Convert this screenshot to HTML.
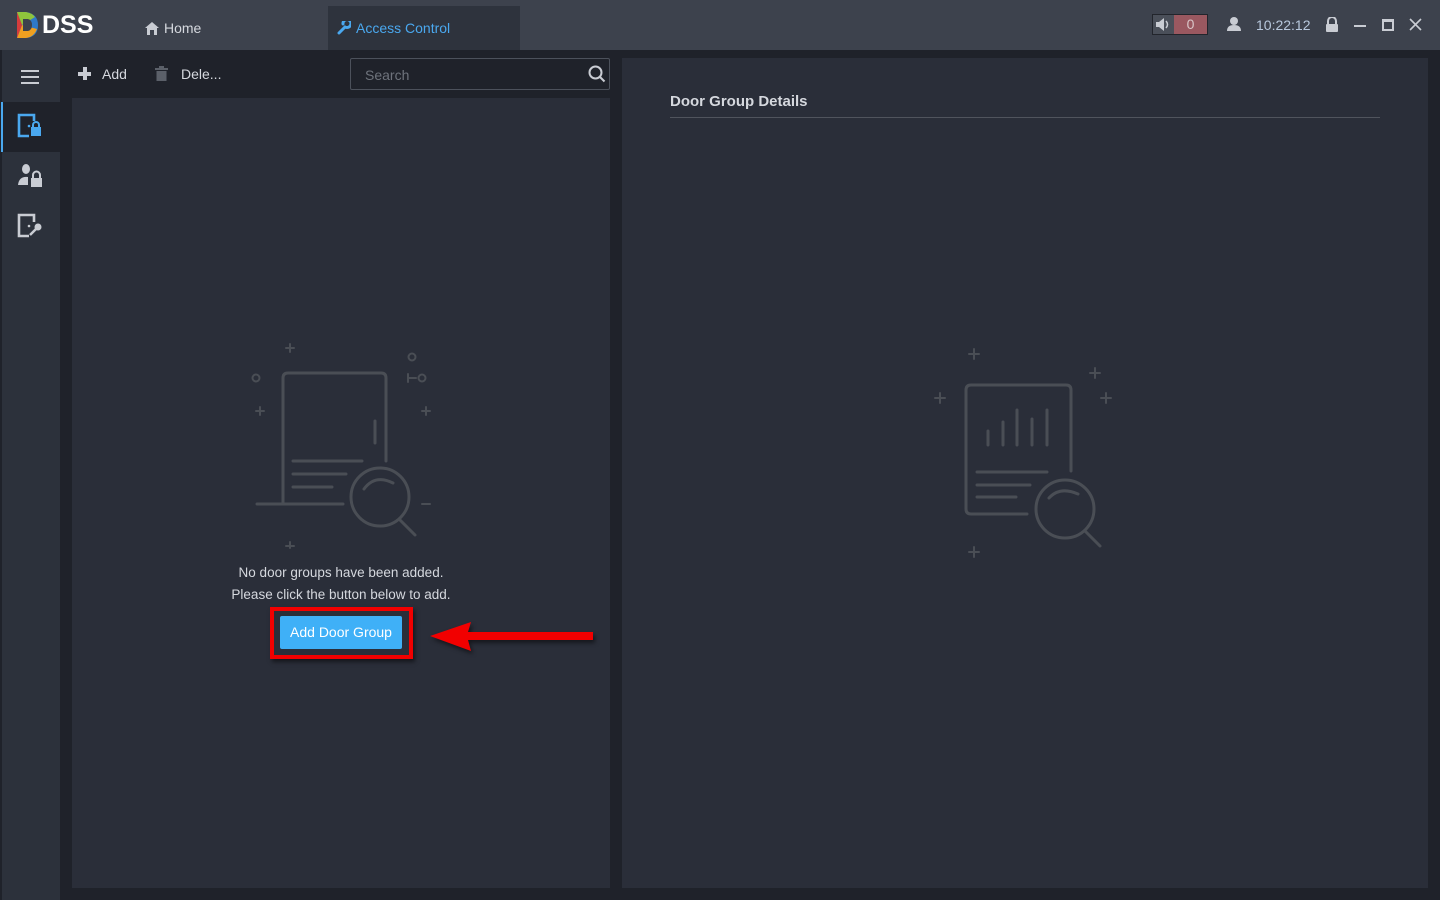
<!DOCTYPE html>
<html><head><meta charset="utf-8"><style>
*{margin:0;padding:0;box-sizing:border-box}
body{width:1440px;height:900px;background:#1f222a;font-family:"Liberation Sans",sans-serif;position:relative;overflow:hidden;color:#c9ccd3}
.abs{position:absolute}
#top{left:0;top:0;width:1440px;height:50px;background:#3d424d}
#side{left:0;top:50px;width:60px;height:850px;background:#2c313b;border-left:2px solid #1f222a}
.panel{background:#2a2e39}
</style></head><body>
<div id="top" class="abs">
 <svg class="abs" style="left:14px;top:10px" width="26" height="30" viewBox="0 0 26 30">
  <path d="M3 2 L12 2 Q24 4 24 15 Q24 27 12 28 L3 28 Z" fill="#2f79c8"/>
  <path d="M3 2 L12 2 Q18 3 21 7 L8 15 Z" fill="#8fc43c"/>
  <path d="M3 28 L12 28 Q20 27 23 19 L8 15 Z" fill="#f0a020"/>
  <path d="M3 2 L8 15 L3 28 Z" fill="#d63c3c"/>
  <path d="M9 9 L14 9 Q18 10 18 15 Q18 20 14 21 L9 21 Z" fill="#3d424d"/>
 </svg>
 <div class="abs" style="left:42px;top:11px;font-size:25px;font-weight:bold;color:#fff;letter-spacing:0px">DSS</div>
 <svg class="abs" style="left:145px;top:22px" width="14" height="13" viewBox="0 0 14 13"><path d="M7 0 L14 6 L12 6 L12 13 L9 13 L9 8 L5 8 L5 13 L2 13 L2 6 L0 6Z" fill="#c9ccd3"/></svg>
 <div class="abs" style="left:164px;top:20px;font-size:14px;color:#d5d8de">Home</div>
 <div class="abs" style="left:328px;top:6px;width:192px;height:44px;background:#2e333d"></div>
 <svg class="abs" style="left:337px;top:21px" width="14" height="14" viewBox="0 0 14 14"><path d="M2 12 L8 6 M8 6 A4 4 0 1 0 6 3" stroke="#4aa8ef" stroke-width="3" fill="none" stroke-linecap="round"/></svg>
 <div class="abs" style="left:356px;top:20px;font-size:14px;color:#4aa8ef">Access Control</div>
 <div class="abs" style="left:1152px;top:14px;width:56px;height:21px;border:1px solid #22252c;background:#4a4f59"></div>
 <div class="abs" style="left:1174px;top:15px;width:33px;height:19px;background:#9a5860;color:#d9c6c8;font-size:14px;text-align:center;line-height:19px">0</div>
 <svg class="abs" style="left:1155px;top:17px" width="16" height="15" viewBox="0 0 16 15"><path d="M1 5 H4 L9 1 V14 L4 10 H1Z" fill="#c9ccd3"/><path d="M11 4 Q14 7.5 11 11" stroke="#c9ccd3" stroke-width="1.5" fill="none"/></svg>
 <svg class="abs" style="left:1226px;top:16px" width="16" height="16" viewBox="0 0 16 16"><circle cx="8" cy="5" r="4" fill="#c9ccd3"/><path d="M1 15 Q1 9 8 9 Q15 9 15 15Z" fill="#c9ccd3"/></svg>
 <div class="abs" style="left:1256px;top:17px;font-size:14px;color:#b8c8dd">10:22:12</div>
 <svg class="abs" style="left:1325px;top:17px" width="14" height="15" viewBox="0 0 14 15"><path d="M3 7 V4 A4 4 0 0 1 11 4 V7" stroke="#c9ccd3" stroke-width="2" fill="none"/><rect x="1" y="7" width="12" height="8" rx="1" fill="#c9ccd3"/></svg>
 <div class="abs" style="left:1354px;top:25px;width:12px;height:2px;background:#c9ccd3"></div>
 <div class="abs" style="left:1382px;top:19px;width:12px;height:12px;border:2px solid #c9ccd3;border-top-width:3px"></div>
 <svg class="abs" style="left:1409px;top:18px" width="13" height="13" viewBox="0 0 13 13"><path d="M1 1 L12 12 M12 1 L1 12" stroke="#c9ccd3" stroke-width="1.6"/></svg>
</div>
<div id="side" class="abs">
 <div class="abs" style="left:19px;top:20px;width:18px;height:2px;background:#c9ccd3;box-shadow:0 6px 0 #c9ccd3,0 12px 0 #c9ccd3"></div>
 <div class="abs" style="left:-1px;top:52px;width:59px;height:50px;background:#1f222a;border-left:2px solid #4aa8ef"></div>
 <svg class="abs" style="left:15px;top:63px" width="30" height="28" viewBox="0 0 30 28">
  <path d="M12 23 H2 V2 H17 V8" stroke="#4aa8ef" stroke-width="2.6" fill="none"/>
  <circle cx="12" cy="13" r="1.3" fill="#4aa8ef"/>
  <path d="M16 14 V12 A3 3 0 0 1 22 12 V14" stroke="#4aa8ef" stroke-width="2" fill="none"/>
  <rect x="14" y="14" width="10" height="9" fill="#4aa8ef"/>
 </svg>
 <svg class="abs" style="left:15px;top:113px" width="30" height="28" viewBox="0 0 30 28">
  <ellipse cx="9" cy="6" rx="4" ry="5" fill="#c9ccd3"/><path d="M1 22 Q2 13 11 14 V22Z" fill="#c9ccd3"/>
  <path d="M16 15 V12 A3.5 3.5 0 0 1 23 12 V15" stroke="#c9ccd3" stroke-width="2" fill="none"/>
  <rect x="14" y="15" width="11" height="9" fill="#c9ccd3"/>
 </svg>
 <svg class="abs" style="left:15px;top:163px" width="30" height="28" viewBox="0 0 30 28">
  <path d="M12 23 H2 V2 H17 V9" stroke="#c9ccd3" stroke-width="2.6" fill="none"/>
  <circle cx="12" cy="13" r="1.3" fill="#c9ccd3"/>
  <circle cx="21" cy="14" r="3.5" fill="#c9ccd3"/><path d="M19 16 L13 22" stroke="#c9ccd3" stroke-width="2.5"/>
 </svg>
</div>
<div class="abs" style="left:60px;top:50px;width:560px;height:48px;background:#1f222a"></div>
<div class="abs" style="left:78px;top:72px;width:13px;height:4px;background:#c9ccd3"></div>
<div class="abs" style="left:83px;top:67px;width:4px;height:13px;background:#c9ccd3"></div>
<div class="abs" style="left:102px;top:66px;font-size:14px;color:#d5d8de">Add</div>
<svg class="abs" style="left:155px;top:66px" width="13" height="15" viewBox="0 0 13 15"><rect x="0" y="2" width="13" height="2" fill="#5b6069"/><rect x="4" y="0" width="5" height="2" fill="#5b6069"/><rect x="1.5" y="5" width="10" height="10" fill="#5b6069"/></svg>
<div class="abs" style="left:181px;top:66px;font-size:14px;color:#d5d8de">Dele...</div>
<div class="abs" style="left:350px;top:58px;width:260px;height:32px;border:1px solid #4c515b;border-radius:2px"></div>
<div class="abs" style="left:365px;top:67px;font-size:14px;color:#6e737c">Search</div>
<svg class="abs" style="left:588px;top:65px" width="18" height="18" viewBox="0 0 18 18"><circle cx="7.5" cy="7.5" r="6" stroke="#c9ccd3" stroke-width="2" fill="none"/><path d="M12 12 L16.5 16.5" stroke="#c9ccd3" stroke-width="2"/></svg>
<div class="abs panel" style="left:72px;top:98px;width:538px;height:790px"></div>
<div class="abs panel" style="left:622px;top:58px;width:806px;height:830px"></div>
<svg class="abs" style="left:240px;top:330px" width="200" height="230" viewBox="0 0 200 230" fill="none" stroke="#4a4e55" stroke-width="3" stroke-linecap="round">
 <path d="M43 174 V48 Q43 43 48 43 H141 Q146 43 146 48 V131"/>
 <path d="M135 91 V113"/>
 <path d="M53 131 H122 M53 144 H106 M53 157 H92"/>
 <path d="M17 174 H103"/>
 <circle cx="140" cy="167" r="29"/><path d="M124 159 Q135 144 153 153"/><path d="M160 190 L175 205"/>
 <path d="M50 14 V22 M46 18 H54 M20 77 V85 M16 81 H24 M186 77 V85 M182 81 H190 M168 44 V52 M168 48 H176 M50 212 V218 M46 216 H54 M182 174 H190" stroke-width="2"/>
 <circle cx="16" cy="48" r="3.5" stroke-width="2"/><circle cx="172" cy="27" r="3.5" stroke-width="2"/><circle cx="182" cy="48" r="3.5" stroke-width="2"/>
</svg>
<div class="abs" style="left:72px;top:562px;width:538px;text-align:center;font-size:13.5px;line-height:22px;color:#d5d8de">No door groups have been added.<br>Please click the button below to add.</div>
<div class="abs" style="left:270px;top:607px;width:143px;height:52px;border:4px solid #f20000;box-shadow:2px 3px 4px rgba(0,0,0,.5)"></div>
<div class="abs" style="left:280px;top:616px;width:122px;height:33px;background:#3fb0f7;border-radius:2px;color:#fff;font-size:14px;text-align:center;line-height:33px">Add Door Group</div>
<svg class="abs" style="left:425px;top:618px" width="175" height="40" viewBox="0 0 175 40"><g filter="drop-shadow(2px 3px 2px rgba(0,0,0,.5))"><path d="M5 18 L46 4 L43 14 L168 14 L168 22 L43 22 L46 33 Z" fill="#f20000"/></g></svg>
<div class="abs" style="left:670px;top:93px;font-size:15px;font-weight:bold;color:#d5d8de">Door Group Details</div>
<div class="abs" style="left:670px;top:117px;width:710px;height:1px;background:#50545d"></div>
<svg class="abs" style="left:920px;top:340px" width="200" height="220" viewBox="0 0 200 220" fill="none" stroke="#4a4e55" stroke-width="3" stroke-linecap="round">
 <path d="M107 174 H51 Q46 174 46 169 V50 Q46 45 51 45 H146 Q151 45 151 50 V131"/>
 <path d="M68 91 V105 M83 82 V105 M97 70 V105 M112 79 V105 M127 70 V105"/>
 <path d="M57 132 H127 M57 145 H110 M57 157 H96"/>
 <circle cx="145" cy="169" r="29"/><path d="M129 158 Q140 146 158 154"/><path d="M166 192 L180 206"/>
 <path d="M54 9 V19 M49 14 H59 M20 53 V63 M15 58 H25 M175 28 V38 M170 33 H180 M186 53 V63 M181 58 H191 M54 207 V217 M49 212 H59" stroke-width="2"/>
</svg>
</body></html>
